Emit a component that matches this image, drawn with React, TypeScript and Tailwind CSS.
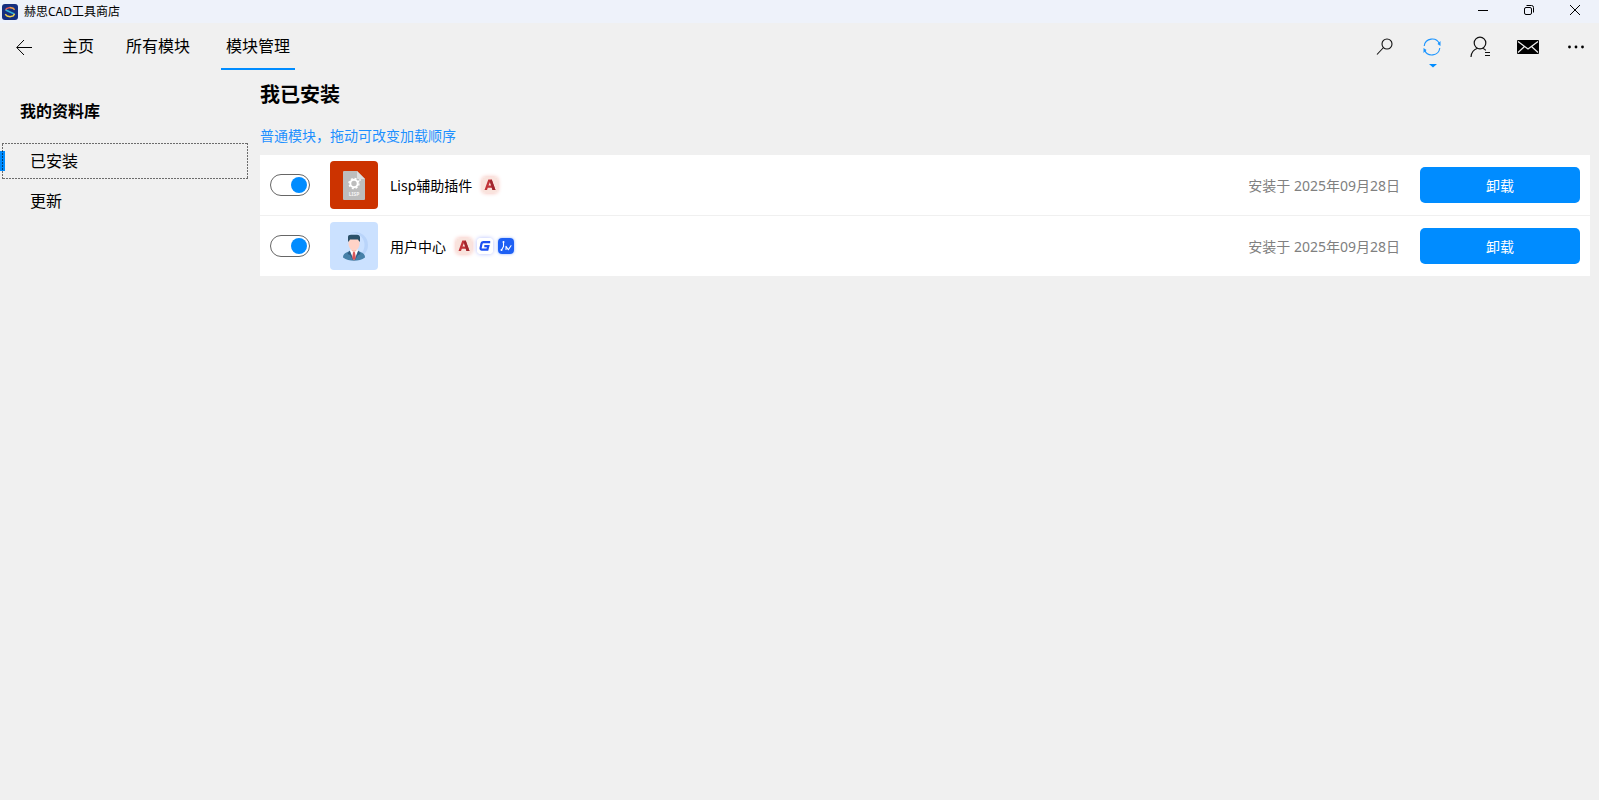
import type { ReactNode } from "react";

type Host = "autocad" | "gstar" | "zwcad";

type Module = {
  id: string;
  name: string;
  icon: ReactNode;
  hosts: Host[];
  installedAt: string;
};

function AppLogo() {
  return (
    <svg viewBox="0 0 16 16" className="size-4">
      <rect width="16" height="16" rx="3" fill="#16307f" />
      <g fill="none" strokeWidth="1.5">
        <path d="M3.600 6.300 4.500 4.600 8 3.400" stroke="#e8574f" />
        <path d="M7.800 3.400 11 4.200l1.600 1.600" stroke="#f0a04b" />
        <path d="M3.700 6 8 8l4.400 2" stroke="#35b4d8" />
        <path d="M3.200 10.200 5.200 12 8 12.700l3.200-.8 1.400-2" stroke="#f3d54e" />
      </g>
    </svg>
  );
}

function LispIcon() {
  return (
    <svg viewBox="0 0 48 48" className="size-12 rounded">
      <rect width="48" height="48" fill="#cc3300" />
      <path d="M14 10h13l8 8v20a1 1 0 0 1-1 1H14a1 1 0 0 1-1-1V11a1 1 0 0 1 1-1z" fill="#bdbdbd" />
      <path d="M27 10l8 8h-7a1 1 0 0 1-1-1z" fill="#dedede" />
      <circle cx="24" cy="22.500" r="3.700" fill="none" stroke="#fff" strokeWidth="2" />
      <circle cx="24" cy="22.500" r="5" fill="none" stroke="#fff" strokeWidth="1.400" strokeDasharray="2 1.930" />
      <circle cx="30" cy="19" r="1" fill="#eee" />
      <text x="24" y="35" textAnchor="middle" fontSize="5" fontWeight="700" fill="#f3f3f3" fontFamily="Noto Sans, sans-serif">
        LISP
      </text>
    </svg>
  );
}

function UserIcon() {
  return (
    <svg viewBox="0 0 48 48" className="size-12 rounded">
      <rect width="48" height="48" fill="#cbe1ff" />
      <circle cx="25" cy="23" r="13" fill="#b9d4fa" />
      <circle cx="22" cy="23" r="12.500" fill="#cbe1ff" />
      <path d="M13 35.500c0-3.500 2.500-5 7-6.500h8c4.500 1.500 7 3 7 6.500-3 2.300-7 3.300-11 3.300s-8-1-11-3.300z" fill="#4680a8" />
      <path d="M20 29l4 9.500 4-9.500-1-2h-6z" fill="#fff" />
      <path d="M19.500 28.500l-2 3.500 2.500 1 3.500 5.700z" fill="#2f5c80" />
      <path d="M28.500 28.500l2 3.500-2.500 1-3.500 5.700z" fill="#2f5c80" />
      <path d="M23 30h2l.8 6-1.800 2.500-1.800-2.500z" fill="#d9565b" />
      <path d="M21.500 25h5v3.500L24 30.500l-2.500-2z" fill="#f3b9ab" />
      <path d="M18.500 17h11v5c0 3-2.500 6.500-5.500 6.500s-5.500-3.500-5.500-6.500z" fill="#ffd3c7" />
      <path d="M18 19.500v-4.500c0-1.500 1-2.200 3-2.200h6c2 0 3 1.200 3 2.700v4h-.8l-1.200-2h-8l-1.200 2z" fill="#2b5068" />
    </svg>
  );
}

function HostBadge({ host }: { host: Host }) {
  if (host === "autocad") {
    return (
      <svg viewBox="0 0 16 16" role="img" aria-label="AutoCAD" className="size-4 rounded shadow-[0_0_4px_#f5b5ad]">
        <rect width="16" height="16" fill="#f9e3dd" />
        <path fillRule="evenodd" d="M2.500 13 6.300 2.500h3.400L13.500 13h-3l-.8-2.200H5.800L5 13zM6.500 8.600h2.700L8 4.900z" fill="#c2343a" />
        <path d="M9.700 2.500 13.500 13h-3L7.700 4z" fill="#a0262e" />
      </svg>
    );
  }
  if (host === "gstar") {
    return (
      <svg viewBox="0 0 16 16" role="img" aria-label="GstarCAD" className="size-4 rounded shadow-[0_0_4px_#b3bdff]">
        <rect width="16" height="16" fill="#fff" />
        <path d="M13.200 4.200H6.300c-1 0-1.500.5-1.800 1.300L3.600 10c-.2 1 .3 1.600 1.200 1.600h5.600l.9-3.400H7.300" fill="none" stroke="#1f51f2" strokeWidth="2.200" />
      </svg>
    );
  }
  return (
    <svg viewBox="0 0 16 16" role="img" aria-label="ZWCAD" className="size-4 rounded shadow-[0_0_3px_#8fb0ff]">
      <rect width="16" height="16" fill="#1e60f4" />
      <g fill="none" stroke="#fff" strokeLinecap="round" strokeLinejoin="round">
        <path d="M5.500 4v4.500L3.500 12" strokeWidth="1.100" />
        <path d="M8 11.500V8.300l2.300 3.400L13 7.700" strokeWidth="1.100" />
      </g>
      <circle cx="5.500" cy="4" r="1" fill="#fff" />
      <circle cx="3.500" cy="12" r="1" fill="#fff" />
    </svg>
  );
}

const tabs = ["主页", "所有模块", "模块管理"];

const modules: Module[] = [
  { id: "lisp", name: "Lisp辅助插件", icon: <LispIcon />, hosts: ["autocad"], installedAt: "2025年09月28日" },
  { id: "user", name: "用户中心", icon: <UserIcon />, hosts: ["autocad", "gstar", "zwcad"], installedAt: "2025年09月28日" },
];

function TitleBar() {
  return (
    <header className="flex h-[23px] items-center justify-between bg-[#eef2fa] pl-0.5">
      <div className="flex items-center gap-1.5">
        <AppLogo />
        <span className="text-xs">赫思CAD工具商店</span>
      </div>
      <div className="flex h-5 self-start pr-px">
        <button aria-label="最小化" className="flex w-[46px] items-center justify-center">
          <svg viewBox="0 0 12 12" className="size-3" fill="none" stroke="#000">
            <path d="M1 6.500h10" />
          </svg>
        </button>
        <button aria-label="还原" className="flex w-[46px] items-center justify-center">
          <svg viewBox="0 0 12 12" className="size-3" fill="none" stroke="#000">
            <rect x="1.500" y="3.500" width="7" height="7" rx="1.500" />
            <path d="M3.500 1.500h5a2 2 0 0 1 2 2v5" />
          </svg>
        </button>
        <button aria-label="关闭" className="flex w-[46px] items-center justify-center">
          <svg viewBox="0 0 12 12" className="size-3" fill="none" stroke="#000">
            <path d="M1 1l10 10M11 1 1 11" />
          </svg>
        </button>
      </div>
    </header>
  );
}

function NavBar() {
  return (
    <nav className="flex h-[47px] items-stretch justify-between">
      <div className="flex">
        <button aria-label="返回" className="flex w-12 items-center justify-center">
          <svg viewBox="0 0 16 16" className="size-4" fill="none" stroke="#000">
            <path d="M16 8.500H1M8 1 .7 8.500 8 16" />
          </svg>
        </button>
        <div className="flex gap-[22px] pl-[9px]">
          {tabs.map((tab) => (
            <button
              key={tab}
              className={`border-b-2 px-[5px] text-base last:ml-[4px] ${
                tab === "模块管理" ? "border-[#008cff]" : "border-transparent"
              }`}
            >
              {tab}
            </button>
          ))}
        </div>
      </div>

      <div className="flex">
        <button aria-label="搜索" className="flex w-12 items-center justify-center">
          <svg viewBox="0 0 18 18" className="size-[18px]" fill="none" stroke="#111" strokeWidth="1.100">
            <circle cx="12" cy="6" r="5" />
            <path d="M8.500 9.500 2 16.500" />
          </svg>
        </button>
        <button aria-label="刷新" className="relative flex w-12 items-center justify-center">
          <svg viewBox="0 0 18 18" className="size-[18px]" fill="none" stroke="#1a94ff" strokeWidth="1.100">
            <path d="M1.200 8a8 8 0 0 1 15.300-2M16.800 10a8 8 0 0 1-15.300 2" />
            <path d="M17.500 3v5l-3-2zM.5 15v-5l3 2z" fill="#1a94ff" stroke="none" />
          </svg>
          <svg viewBox="0 0 8 4" className="absolute bottom-0.5 left-[21px] h-1 w-2" fill="#008cff">
            <path d="M0 0h8L4 3.500z" />
          </svg>
        </button>
        <button aria-label="用户" className="flex w-12 items-center justify-center">
          <svg viewBox="0 0 20 22" className="h-[22px] w-5" fill="none" stroke="#111" strokeWidth="1.200">
            <circle cx="10" cy="7" r="5.800" />
            <path d="M1 21c.3-4.500 3-7.500 6.500-8.700M12.500 12.300c1.200.4 2.400 1 3.300 2M15 16.500h5M15 19.500h5" />
          </svg>
        </button>
        <button aria-label="消息" className="flex w-12 items-center justify-center">
          <svg viewBox="0 0 22 14" className="h-3.5 w-[22px]">
            <rect width="22" height="14" rx="1" fill="#000" />
            <path d="M1 1.500 11 9l10-7.500M1 12.500l6.500-6M21 12.500l-6.500-6" fill="none" stroke="#f0f0f0" strokeWidth="1.200" />
          </svg>
        </button>
        <button aria-label="更多" className="flex w-[47px] items-center justify-center">
          <svg viewBox="0 0 18 4" className="h-1 w-[18px]">
            <circle cx="2.500" cy="2" r="1.400" />
            <circle cx="9" cy="2" r="1.400" />
            <circle cx="15.500" cy="2" r="1.400" />
          </svg>
        </button>
      </div>
    </nav>
  );
}

function Sidebar() {
  return (
    <aside className="w-[260px] shrink-0 pt-[29px]">
      <h2 className="pl-5 text-base font-bold">我的资料库</h2>
      <div className="mt-5 flex flex-col gap-1 pl-0.5 pr-3">
        <button className="relative h-9 pl-7 text-left text-base">
          <span className="absolute -left-0.5 top-2 h-5 w-[5px] bg-[#008cff]" />
          {/* focus ring */}
          <svg
            className="absolute inset-0 size-full"
            fill="none"
            stroke="#000"
            strokeOpacity="0.55"
            strokeWidth="2"
            strokeDasharray="2 1"
          >
            <rect width="100%" height="100%" />
          </svg>
          已安装
        </button>
        <button className="h-9 pl-7 text-left text-base">更新</button>
      </div>
    </aside>
  );
}

function ModuleRow({ module }: { module: Module }) {
  return (
    <li className="flex h-[60px] items-center bg-white px-2.5">
      <input
        type="checkbox"
        role="switch"
        defaultChecked
        aria-label={module.name}
        className="flex h-[22px] w-10 appearance-none items-center rounded-full border border-[#666] px-0.5 before:size-4 before:rounded-full before:bg-[#999] checked:justify-end checked:before:bg-[#008cff]"
      />
      <div className="ml-5">{module.icon}</div>
      <span className="ml-3 pt-0.5 text-sm">{module.name}</span>
      <div className="ml-2.5 flex gap-[5px]">
        {module.hosts.map((host) => (
          <HostBadge key={host} host={host} />
        ))}
      </div>
      <span className="ml-auto pt-0.5 text-sm text-[#808080]">安装于 {module.installedAt}</span>
      <button className="ml-5 h-9 w-40 rounded-[5px] bg-[#008cff] pt-0.5 text-sm text-white">卸载</button>
    </li>
  );
}

export default function App() {
  return (
    <div className="flex min-h-screen flex-col bg-[#f0f0f0] font-['Noto_Sans','Noto_Sans_CJK_SC',sans-serif] text-black">
      <TitleBar />
      <NavBar />
      <div className="flex flex-1">
        <Sidebar />
        <main className="min-w-0 flex-1 pr-[9px] pt-[11px]">
          <h1 className="text-xl font-bold">我已安装</h1>
          <p className="mt-[17px] text-sm text-[#1e90ff]">普通模块，拖动可改变加载顺序</p>
          <ul className="mt-[9px] flex flex-col gap-px">
            {modules.map((module) => (
              <ModuleRow key={module.id} module={module} />
            ))}
          </ul>
        </main>
      </div>
    </div>
  );
}
